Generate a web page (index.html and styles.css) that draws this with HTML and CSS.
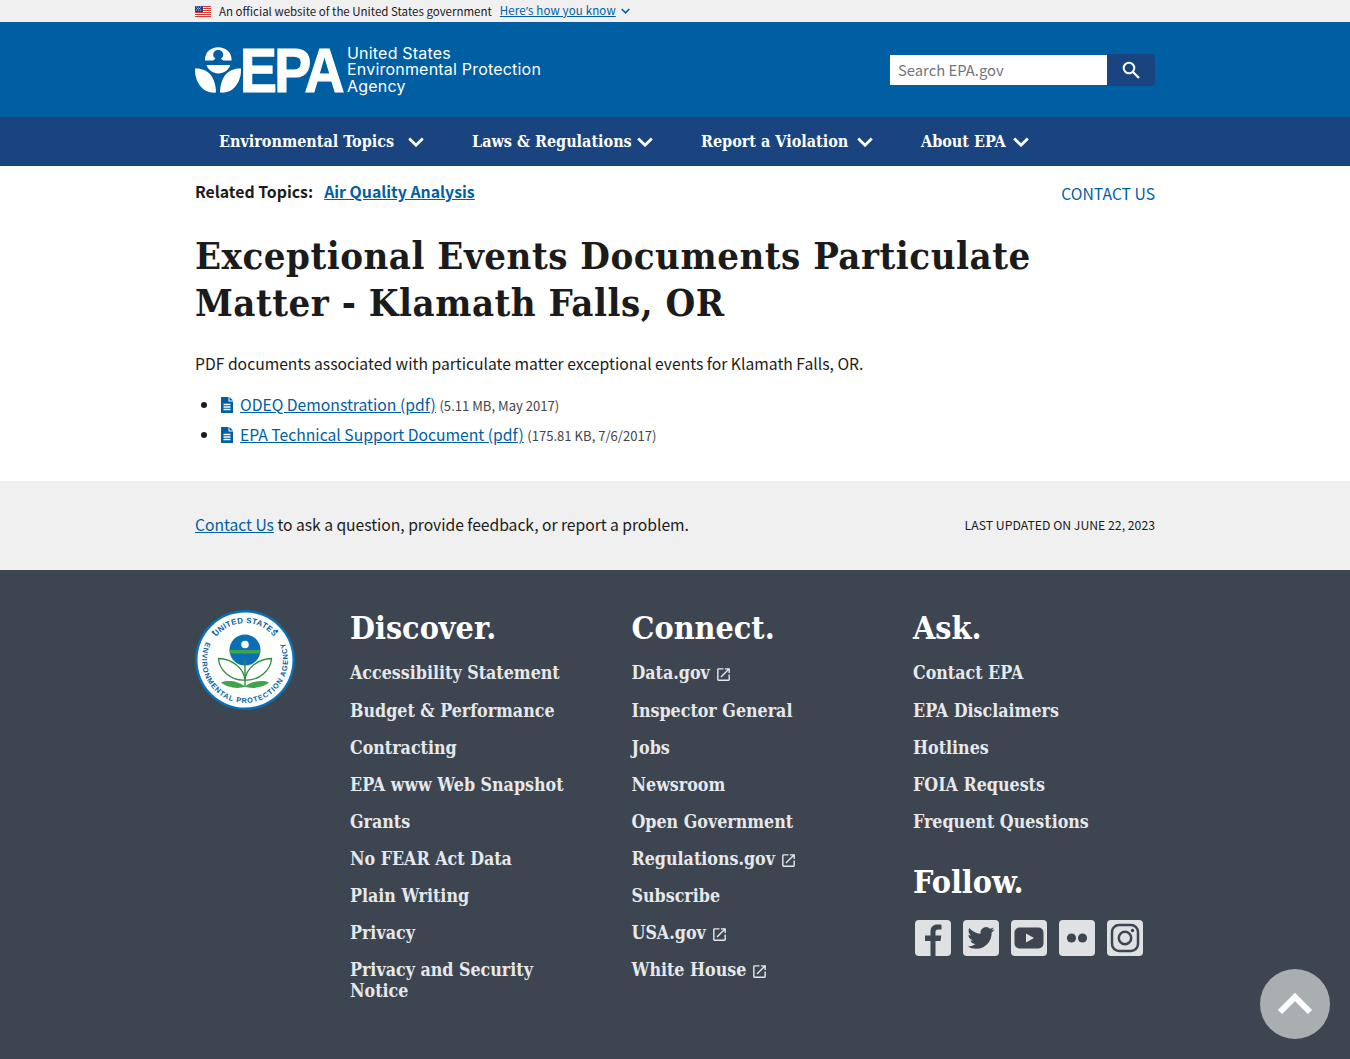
FILE: index.html
```html
<!DOCTYPE html>
<html lang="en">
<head>
<meta charset="utf-8">
<title>Exceptional Events Documents Particulate Matter - Klamath Falls, OR</title>
<link rel="stylesheet" href="styles.css">
</head>
<body>
<svg class="sprite" width="0" height="0">
  <defs>
    <symbol id="ext" viewBox="0 0 24 24"><path fill="currentColor" d="M19 19H5V5h7V3H5a2 2 0 0 0-2 2v14a2 2 0 0 0 2 2h14c1.100 0 2-.9 2-2v-7h-2v7zM14 3v2h3.590l-9.830 9.830 1.410 1.410L19 6.410V10h2V3h-7z"/></symbol>
    <symbol id="doc" viewBox="0 0 14 16"><path d="M1 0h7.500v4.500H13V16H1z" fill="#005ea2"/><path d="M9.500 0 13 3.500H9.500z" fill="#005ea2"/><path d="M3.500 7.500h7M3.500 10h7M3.500 12.500h7" stroke="#fff" stroke-width="1.300"/></symbol>
    <symbol id="chev" viewBox="0 0 16 10"><path d="M1.200 1.500 8 8.200l6.800-6.700" fill="none" stroke="currentColor" stroke-width="2.800"/></symbol>
  </defs>
</svg>

<section class="gov">
  <div class="wrap gov-row">
    <svg class="flag" viewBox="0 0 16 11" width="16" height="11"><rect width="16" height="11" fill="#fff"/><path d="M0 .5h16M0 2.500h16M0 4.500h16M0 6.500h16M0 8.500h16M0 10.500h16" stroke="#d83933"/><rect width="8" height="6" fill="#2a3f87"/><path d="M1 1h1M3 1h1M5 1h1M2 2.500h1M4 2.500h1M1 4h1M3 4h1M5 4h1" stroke="#fff" stroke-width=".7"/></svg>
    <span class="gov-text">An official website of the United States government</span>
    <a class="gov-link" href="#">Here<span class="apos">’</span>s how you know</a>
    <svg class="gov-chev" width="9" height="6"><use href="#chev"/></svg>
  </div>
</section>

<header class="top">
  <div class="wrap top-row">
    <a class="logo" href="#">
      <svg class="logo-mark" viewBox="0 0 46 46" width="46" height="46">
        <path fill="#fff" d="M10 13.500C9.500 5 16 .2 23.200.2 30.500.2 37 5 36.600 13.500h-8.400c-.6-.8-1.500-1.300-2.300-1.700 1.600-1.100 2.300-2.500 2.300-4 0-2.800-2.300-4.700-5-4.700s-5 1.900-5 4.700c0 1.500.8 2.900 2.300 4-.9.400-1.700.9-2.300 1.700z"/>
        <path fill="#fff" d="M11.500 18h23.800c-1.200 4.700-6.500 8.400-12 8.400-5.400 0-10.500-3.700-11.800-8.400z"/>
        <path fill="#fff" d="M0 21.500c9.500-.5 20.500 4.800 21 24-11.800 1.500-21.500-9-21-24z"/>
        <path fill="#fff" d="M46 21.500c-9.500-.5-20.500 4.800-21 24 11.800 1.500 21.500-9 21-24z"/>
      </svg>
      <span class="logo-epa">EPA</span>
      <span class="logo-name">United States<br>Environmental Protection<br>Agency</span>
    </a>
    <form class="search">
      <input class="search-input" type="text" placeholder="Search EPA.gov">
      <button class="search-btn" type="button" aria-label="Search">
        <svg viewBox="0 0 18 18" width="18" height="18"><circle cx="7" cy="7" r="5.300" fill="none" stroke="#fff" stroke-width="2"/><path d="m11 11 6 6" stroke="#fff" stroke-width="2.200"/></svg>
      </button>
    </form>
  </div>
</header>

<nav class="nav">
  <div class="wrap nav-row">
    <a class="nav-item" href="#">Environmental Topics<svg class="nav-chev"><use href="#chev"/></svg></a>
    <a class="nav-item" href="#">Laws &amp; Regulations<svg class="nav-chev"><use href="#chev"/></svg></a>
    <a class="nav-item" href="#">Report a Violation<svg class="nav-chev"><use href="#chev"/></svg></a>
    <a class="nav-item" href="#">About EPA<svg class="nav-chev"><use href="#chev"/></svg></a>
  </div>
</nav>

<main class="wrap main">
  <div class="related">
    <div><strong class="related-label">Related Topics:</strong><a class="related-link" href="#">Air Quality Analysis</a></div>
    <a class="contact-top" href="#">CONTACT US</a>
  </div>
  <h1 class="title">Exceptional Events Documents Particulate Matter - Klamath Falls, OR</h1>
  <p class="intro">PDF documents associated with particulate matter exceptional events for Klamath Falls, OR.</p>
  <ul class="docs">
    <li><svg class="doc-icon"><use href="#doc"/></svg><a href="#">ODEQ Demonstration (pdf)</a> <span class="meta">(5.11 MB, May 2017)</span></li>
    <li><svg class="doc-icon"><use href="#doc"/></svg><a href="#">EPA Technical Support Document (pdf)</a> <span class="meta">(175.81 KB, 7/6/2017)</span></li>
  </ul>
</main>

<section class="band">
  <div class="wrap band-row">
    <p class="band-text"><a href="#">Contact Us</a> to ask a question, provide feedback, or report a problem.</p>
    <p class="updated">LAST UPDATED ON JUNE 22, 2023</p>
  </div>
</section>

<footer class="foot">
  <div class="wrap foot-grid">
    <svg class="seal" viewBox="0 0 100 100" width="100" height="100">
      <defs>
        <path id="sealTop" d="M50 87a37 37 0 0 1 0-74 37 37 0 0 1 0 74"/>
        <path id="sealBot" d="M50 7a43 43 0 0 0 0 86 43 43 0 0 0 0-86"/>
      </defs>
      <circle cx="50" cy="50" r="50" fill="#0b6fb3"/>
      <circle cx="50" cy="50" r="47.500" fill="#fff"/>
      <text class="seal-text"><textPath href="#sealTop" startOffset="50%" text-anchor="middle">UNITED STATES</textPath></text>
      <text class="seal-text seal-text-small"><textPath href="#sealBot" startOffset="50%" text-anchor="middle">ENVIRONMENTAL PROTECTION AGENCY</textPath></text>
      <circle cx="18" cy="22" r="1.300" fill="#0b6fb3"/><circle cx="82" cy="21" r="1.300" fill="#0b6fb3"/>
      <circle cx="50" cy="40" r="15.500" fill="#0b6fb3"/>
      <rect x="34.800" y="40" width="30.400" height="3.500" fill="#3fa34d"/>
      <circle cx="50" cy="34.500" r="3.800" fill="#fff"/>
      <path d="M49.300 50h1.400v27h-1.400z" fill="#2e8b3d"/>
      <path d="M50 70c-1-11-12-21-26.500-21.500C24 60 36 71 50 70zM50 70c1-11 12-21 26.500-21.500C76 60 64 71 50 70z" fill="#fff" stroke="#2e8b3d" stroke-width="1.300"/>
      <path d="M50 76.500c-6-5-17-7-24-4 6 5 17 7 24 4zM50 76.500c6-5 17-7 24-4-6 5-17 7-24 4z" fill="#3fa34d"/>
    </svg>

    <div class="col">
      <h2 class="col-title">Discover.</h2>
      <ul class="links">
        <li><a href="#">Accessibility Statement</a></li>
        <li><a href="#">Budget &amp; Performance</a></li>
        <li><a href="#">Contracting</a></li>
        <li><a href="#">EPA www Web Snapshot</a></li>
        <li><a href="#">Grants</a></li>
        <li><a href="#">No FEAR Act Data</a></li>
        <li><a href="#">Plain Writing</a></li>
        <li><a href="#">Privacy</a></li>
        <li><a href="#">Privacy and Security Notice</a></li>
      </ul>
    </div>

    <div class="col">
      <h2 class="col-title">Connect.</h2>
      <ul class="links">
        <li><a href="#">Data.gov<svg class="ext"><use href="#ext"/></svg></a></li>
        <li><a href="#">Inspector General</a></li>
        <li><a href="#">Jobs</a></li>
        <li><a href="#">Newsroom</a></li>
        <li><a href="#">Open Government</a></li>
        <li><a href="#">Regulations.gov<svg class="ext"><use href="#ext"/></svg></a></li>
        <li><a href="#">Subscribe</a></li>
        <li><a href="#">USA.gov<svg class="ext"><use href="#ext"/></svg></a></li>
        <li><a href="#">White House<svg class="ext"><use href="#ext"/></svg></a></li>
      </ul>
    </div>

    <div class="col">
      <h2 class="col-title">Ask.</h2>
      <ul class="links">
        <li><a href="#">Contact EPA</a></li>
        <li><a href="#">EPA Disclaimers</a></li>
        <li><a href="#">Hotlines</a></li>
        <li><a href="#">FOIA Requests</a></li>
        <li><a href="#">Frequent Questions</a></li>
      </ul>
      <h2 class="col-title follow">Follow.</h2>
      <div class="social">
        <svg class="soc" viewBox="0 0 36 36"><rect width="36" height="36" rx="4" fill="#dfe1e2"/><path d="M20.500 36V21h5l.8-5.500h-5.800v-3.300c0-1.700.6-2.700 2.800-2.700h3.200V4.700c-.8-.1-2.200-.3-4-.3-4.300 0-7 2.500-7 7.200v3.900H10V21h5.500v15z" fill="#3d4551"/></svg>
        <svg class="soc" viewBox="0 0 36 36"><rect width="36" height="36" rx="4" fill="#dfe1e2"/><g transform="translate(4.500 4.500) scale(1.120)"><path d="M23.953 4.570a10 10 0 0 1-2.825.775 4.958 4.958 0 0 0 2.163-2.723c-.951.555-2.005.959-3.127 1.184a4.920 4.920 0 0 0-8.384 4.482C7.690 8.095 4.067 6.130 1.640 3.162a4.822 4.822 0 0 0-.666 2.475c0 1.710.870 3.213 2.188 4.096a4.904 4.904 0 0 1-2.228-.616v.060a4.923 4.923 0 0 0 3.946 4.827 4.996 4.996 0 0 1-2.212.085 4.936 4.936 0 0 0 4.604 3.417 9.867 9.867 0 0 1-6.102 2.105c-.390 0-.779-.023-1.170-.067a13.995 13.995 0 0 0 7.557 2.209c9.053 0 13.998-7.496 13.998-13.985 0-.210 0-.420-.015-.630A9.935 9.935 0 0 0 24 4.590z" fill="#3d4551"/></g></svg>
        <svg class="soc" viewBox="0 0 36 36"><rect width="36" height="36" rx="4" fill="#dfe1e2"/><rect x="3.500" y="7.500" width="29" height="21" rx="5" fill="#3d4551"/><path d="m15 13.500 8 4.500-8 4.500z" fill="#dfe1e2"/></svg>
        <svg class="soc" viewBox="0 0 36 36"><rect width="36" height="36" rx="4" fill="#dfe1e2"/><circle cx="12.500" cy="18" r="4.600" fill="#3d4551"/><circle cx="23.500" cy="18" r="4.600" fill="#3d4551"/></svg>
        <svg class="soc" viewBox="0 0 36 36"><rect width="36" height="36" rx="4" fill="#dfe1e2"/><rect x="5" y="5" width="26" height="26" rx="7" fill="none" stroke="#3d4551" stroke-width="2.500"/><circle cx="18" cy="18" r="6.200" fill="none" stroke="#3d4551" stroke-width="2.500"/><circle cx="25.500" cy="10.500" r="1.700" fill="#3d4551"/></svg>
      </div>
    </div>
  </div>
  <a class="to-top" href="#" aria-label="Back to top"><svg viewBox="0 0 36 24" width="36" height="24"><path d="M3 20 18 5l15 15" fill="none" stroke="#fff" stroke-width="6"/></svg></a>
</footer>
</body>
</html>
```
FILE: styles.css
```css
* { box-sizing: border-box; }
html, body { margin: 0; padding: 0; }
body {
  font-family: "Noto Sans CJK SC", "Noto Sans", sans-serif;
  font-size: 15.700px;
  line-height: 1.3;
  color: #1b1b1b;
  background: #fff;
  position: relative;
  height: 1059px;
  overflow: hidden;
}
.sprite { position: absolute; }
a { color: #005ea2; }
ul { margin: 0; padding: 0; }
p { margin: 0; }
.wrap { width: 960px; margin: 0 auto; }

.gov { height: 22px; background: #f0f0f0; }
.gov-row { display: flex; align-items: center; height: 22px; font-size: 11.500px; }
.flag { margin-right: 8px; }
.gov-text { margin-right: 8px; }
.gov-link { letter-spacing: .15px; }
.apos { font-family: "Noto Sans", sans-serif; }
.gov-chev { margin-left: 5px; color: #005ea2; }

.top { height: 95px; background: #005ea2; }
.top-row { display: flex; align-items: center; justify-content: space-between; height: 95px; }
.logo { display: flex; align-items: center; color: #fff; text-decoration: none; }
.logo-epa { display: block; width: 103px; margin-left: -1px; margin-right: 4px; white-space: nowrap; font-family: "Liberation Sans", sans-serif; font-weight: 700; font-size: 63px; line-height: 46px; letter-spacing: -3px; -webkit-text-stroke: 1.200px #fff; transform: scaleX(.88); transform-origin: left center; }
.logo-name { font-family: "Inter", "Liberation Sans", sans-serif; font-size: 16px; line-height: 16.500px; letter-spacing: .2px; }
.search { display: flex; height: 32px; align-items: center; }
.search-input { width: 217px; height: 30px; border: 0; padding: 0 8px; font: 14.800px "Noto Sans CJK SC", sans-serif; background: #fff; color: #1b1b1b; outline: 0; }
.search-input::placeholder { color: #71767a; opacity: 1; }
.search-btn { width: 48px; height: 32px; border: 0; background: #1a4480; border-radius: 0 4px 4px 0; display: flex; align-items: center; justify-content: center; padding: 0; }

.nav { height: 49px; background: #1a4480; }
.nav-row { display: grid; grid-template-columns: 205px 181px 172px 108px; column-gap: 48px; height: 49px; align-items: center; padding-left: 24px; padding-top: 1px; }
.nav-item { display: flex; align-items: center; justify-content: space-between; color: #fff; text-decoration: none; font-family: "DejaVu Serif Condensed", "DejaVu Serif", serif; font-weight: 700; font-size: 16px; }
.nav-chev { width: 16px; height: 10px; color: #fff; }

.main { height: 315px; padding-top: 16px; }
.related { display: flex; justify-content: space-between; align-items: flex-start; height: 41px; }
.related-label { font-weight: 700; margin-right: 11px; }
.related-label, .related-link { font-size: 15.850px; }
.related-link { font-weight: 700; }
.contact-top { text-decoration: none; margin-top: 2px; }
.title { margin: 9px 0 0; max-width: 900px; font-family: "DejaVu Serif Condensed", "DejaVu Serif", serif; font-weight: 700; font-size: 38px; line-height: 47px; letter-spacing: .5px; }
.intro { margin-top: 26px; line-height: 24px; }
.docs { margin-top: 14px; padding-left: 25px; }
.docs li { height: 30px; line-height: 30px; }
.doc-icon { width: 14px; height: 16px; margin-right: 6px; vertical-align: -2px; }
.meta { font-size: 13.100px; color: #454545; }

.band { height: 89px; background: #f0f0f0; }
.band-row { display: flex; justify-content: space-between; align-items: center; height: 89px; }
.band-text { letter-spacing: -.04px; }
.updated { font-size: 12.250px; }

.foot { height: 489px; background: #3d4551; color: #f0f0f0; padding-top: 40px; }
.foot-grid { display: grid; grid-template-columns: 115.500px 242px 242px 242px; column-gap: 39.500px; }
.col-title { margin: 0 0 16px; font-family: "DejaVu Serif Condensed", "DejaVu Serif", serif; font-weight: 700; font-size: 32px; line-height: 36px; color: #fff; }
.links { list-style: none; }
.links li { margin-bottom: 16px; font-family: "DejaVu Serif Condensed", "DejaVu Serif", serif; font-weight: 700; font-size: 17.700px; line-height: 21px; }
.links li:first-child { margin-bottom: 17px; }
.links a { color: #e6e8ea; text-decoration: none; }
.ext { width: 17px; height: 17px; margin-left: 5px; vertical-align: -4px; color: #e6e8ea; }
.follow { margin-top: 32px; margin-bottom: 20px; }
.social { display: flex; gap: 12px; padding-left: 2px; }
.soc { width: 36px; height: 36px; }
.to-top { position: absolute; left: 1260px; top: 969px; width: 70px; height: 70px; border-radius: 50%; background: #a9aeb1; display: flex; align-items: center; justify-content: center; }
.seal-text { font-family: "Liberation Sans", sans-serif; font-weight: 700; font-size: 8px; fill: #0b5f9e; letter-spacing: .3px; }
.seal-text-small { font-size: 7.300px; letter-spacing: .85px; }
```
